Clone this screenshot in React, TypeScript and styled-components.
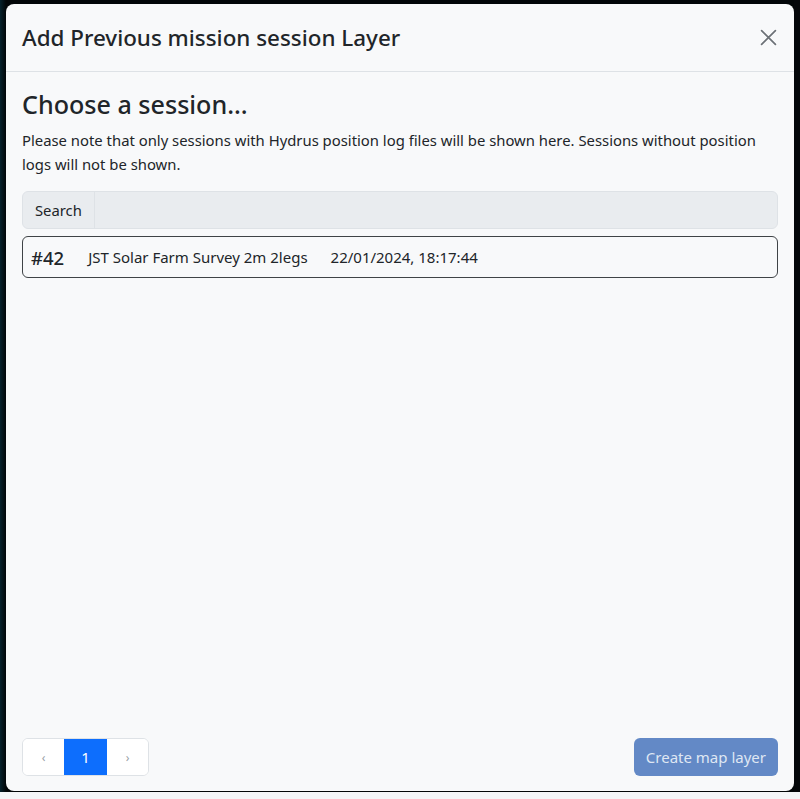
import React from "react";
import styled, { createGlobalStyle } from "styled-components";

const Global = createGlobalStyle`
  html, body { margin: 0; padding: 0; background: #f4f6f8; }
  body { font-family: "Noto Sans", "Open Sans", Arial, sans-serif; color: #212529; }
  * { box-sizing: border-box; }
`;

const Backdrop = styled.div`
  height: 792px;
  padding: 4px 6px 1px 6px;
  background: linear-gradient(90deg, #06222c 0px, #020608 6px, #020608 794px, #05070a 794px);
  background-color: #040b14;
  display: flex;
`;

const Modal = styled.div`
  flex: 1;
  display: flex;
  flex-direction: column;
  background: #f8f9fa;
  border-radius: 8px;
  overflow: hidden;
`;

const Header = styled.div`
  display: flex;
  align-items: center;
  justify-content: space-between;
  padding: 16px 16px 16px 16px;
  height: 68px;
  border-bottom: 1px solid #dee2e6;
`;

const Title = styled.h5`
  margin: 0;
  font-size: 22.4px;
  font-weight: 500;
  line-height: 34px;
`;

const Close = styled.button`
  border: 0;
  background: transparent;
  padding: 0;
  width: 20px;
  height: 20px;
  display: flex;
  align-items: center;
  justify-content: center;
  cursor: pointer;
`;

const Body = styled.div`
  flex: 1;
  padding: 17px 16px 16px;
  display: flex;
  flex-direction: column;
`;

const Heading = styled.h4`
  margin: 0 0 9px;
  font-size: 25.1px;
  font-weight: 500;
  line-height: 30px;
`;

const Note = styled.p`
  margin: 0 0 15px;
  font-size: 14.85px;
  line-height: 24px;
`;

const InputGroup = styled.div`
  display: flex;
  height: 38px;
  border: 1px solid #dee2e6;
  border-radius: 6px;
  background: #e9ecef;
  margin-bottom: 7px;
`;

const Addon = styled.span`
  display: flex;
  align-items: center;
  padding: 0 12px;
  font-size: 14.8px;
  color: #212529;
  border-right: 1px solid #dee2e6;
`;

const SearchInput = styled.input`
  flex: 1;
  border: 0;
  background: transparent;
  outline: none;
`;

const SessionRow = styled.div`
  display: flex;
  align-items: center;
  height: 42px;
  padding: 0 8px;
  border: 1px solid #3f4346;
  border-radius: 6px;
  background: #f8f9fa;
`;

const SessionId = styled.span`
  font-size: 18.5px;
  font-weight: 500;
  margin-right: 24px;
`;

const SessionText = styled.span`
  font-size: 15px;
  margin-right: 23px;
`;

const Footer = styled.div`
  display: flex;
  align-items: center;
  justify-content: space-between;
  padding: 0 16px 15px;
`;

const Pagination = styled.div`
  display: flex;
  height: 38px;
  border: 1px solid #dee2e6;
  border-radius: 6px;
  background: #fff;
  overflow: hidden;
`;

const PageItem = styled.span<{ $active?: boolean }>`
  width: ${(p) => (p.$active ? "43px" : "41px")};
  display: flex;
  align-items: center;
  justify-content: center;
  font-size: ${(p) => (p.$active ? "15px" : "12px")};
  color: ${(p) => (p.$active ? "#fff" : "#9aa0a6")};
  background: ${(p) => (p.$active ? "#0d6efd" : "#fff")};
`;

const CreateButton = styled.button`
  height: 38px;
  padding: 0 12px;
  border: 0;
  border-radius: 6px;
  background: #6389c6;
  color: #dfe7f3;
  font-family: inherit;
  font-size: 15px;
  cursor: default;
`;

export default function App() {
  return (
    <>
      <Global />
      <Backdrop>
        <Modal>
          <Header>
            <Title>Add Previous mission session Layer</Title>
            <Close aria-label="Close">
              <svg width="17" height="17" viewBox="0 0 16 16">
                <path d="M1.5 1.5 L14.5 14.5 M14.5 1.5 L1.5 14.5" stroke="#6c7176" strokeWidth="1.6" strokeLinecap="round" />
              </svg>
            </Close>
          </Header>
          <Body>
            <Heading>Choose a session...</Heading>
            <Note>
              Please note that only sessions with Hydrus position log files will be shown here. Sessions without position logs will not be shown.
            </Note>
            <InputGroup>
              <Addon>Search</Addon>
              <SearchInput />
            </InputGroup>
            <SessionRow>
              <SessionId>#42</SessionId>
              <SessionText>JST Solar Farm Survey 2m 2legs</SessionText>
              <SessionText>22/01/2024, 18:17:44</SessionText>
            </SessionRow>
          </Body>
          <Footer>
            <Pagination>
              <PageItem>‹</PageItem>
              <PageItem $active>1</PageItem>
              <PageItem>›</PageItem>
            </Pagination>
            <CreateButton disabled>Create map layer</CreateButton>
          </Footer>
        </Modal>
      </Backdrop>
    </>
  );
}
